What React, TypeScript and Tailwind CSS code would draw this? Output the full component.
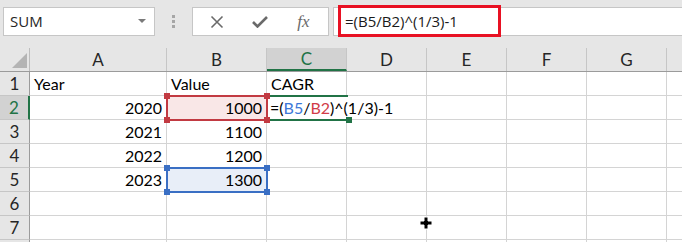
import React from "react";

const cols = [
  { k: "A", w: 137 },
  { k: "B", w: 100 },
  { k: "C", w: 80 },
  { k: "D", w: 80 },
  { k: "E", w: 80 },
  { k: "F", w: 80 },
  { k: "G", w: 80 },
  { k: "", w: 40 },
];

const data: Record<string, string> = {
  A1: "Year",
  B1: "Value",
  C1: "CAGR",
  A2: "2020",
  B2: "1000",
  A3: "2021",
  B3: "1100",
  A4: "2022",
  B4: "1200",
  A5: "2023",
  B5: "1300",
};

const cellFont = { fontFamily: "Lato, 'Liberation Sans', sans-serif" };
const uiFont = { fontFamily: "'Open Sans', 'Noto Sans', sans-serif" };

function Handle({ className }: { className: string }) {
  return <div className={"absolute w-[6px] h-[6px] " + className} />;
}

export default function App() {
  const rows = [1, 2, 3, 4, 5, 6, 7, 8];
  return (
    <div className="w-[682px] h-[242px] overflow-hidden bg-white relative" style={cellFont}>
      {/* toolbar */}
      <div className="h-[48px] bg-[#e6e6e6] flex items-start pt-[7px] pl-[3px]">
        <div
          className="w-[152px] h-[29px] bg-white border border-[#c6c6c6] flex items-center pl-[6px] pr-[8px] text-[15px] text-[#262626]"
          style={uiFont}
        >
          <span className="flex-1">SUM</span>
          <svg width="8" height="5" viewBox="0 0 8 5">
            <path d="M0 0 L8 0 L4 4 Z" fill="#7a7a7a" />
          </svg>
        </div>
        <div className="w-[37px] h-[29px] flex flex-col items-center justify-center gap-[2px]">
          <div className="w-[3px] h-[3px] bg-[#a6a6a6]" />
          <div className="w-[3px] h-[3px] bg-[#a6a6a6]" />
          <div className="w-[3px] h-[3px] bg-[#a6a6a6]" />
        </div>
        <div className="w-[137px] h-[29px] bg-white border border-[#c6c6c6] flex items-center">
          <div className="w-[48px] flex justify-center">
            <svg width="14" height="14" viewBox="0 0 14 14">
              <path d="M1.5 1.5 L12.5 12.5 M12.5 1.5 L1.5 12.5" stroke="#6a6a6a" strokeWidth="1.6" />
            </svg>
          </div>
          <div className="w-[38px] flex justify-center">
            <svg width="16" height="13" viewBox="0 0 16 13">
              <path d="M1 7 L5.5 11.5 L15 2" stroke="#6a6a6a" strokeWidth="2.6" fill="none" />
            </svg>
          </div>
          <div className="flex-1 flex justify-center">
            <span
              className="italic text-[17px] text-[#6a6a6a] leading-none"
              style={{ fontFamily: "'Liberation Serif', 'DejaVu Serif', serif" }}
            >
              fx
            </span>
          </div>
        </div>
        <div className="ml-[4px] flex-1 h-[29px] bg-white border border-[#c6c6c6] border-r-0 flex items-center relative">
          <span className="pl-[11px] text-[15px] text-[#1a1a1a]" style={uiFont}>
            =(B5/B2)^(1/3)-1
          </span>
          <div className="absolute left-[4px] top-[-3px] w-[163px] h-[32px] border-[3px] border-[#e81123]" />
        </div>
      </div>

      {/* grid */}
      <div className="relative">
        {/* header row */}
        <div className="flex h-[24px] bg-[#e6e6e6] border-b border-[#9b9b9b]">
          <div className="w-[30px] shrink-0 border-r border-[#bdbdbd] relative">
            <svg className="absolute left-[12px] top-[5px]" width="15" height="15" viewBox="0 0 15 15">
              <path d="M15 0 L15 15 L0 15 Z" fill="#b4b4b4" />
            </svg>
          </div>
          {cols.map((c) => (
            <div
              key={c.k || "x"}
              className={
                "shrink-0 flex items-center justify-center text-[17px] border-r border-[#c6c6c6] " +
                (c.k === "C" ? "bg-[#d2d2d2] text-[#217346] border-b-2 border-b-[#217346]" : "text-[#262626]")
              }
              style={{ width: c.w }}
            >
              {c.k}
            </div>
          ))}
        </div>
        {rows.map((r) => (
          <div key={r} className="flex h-[24px]">
            <div
              className={
                "w-[30px] shrink-0 flex items-center justify-center text-[17px] border-b border-[#c6c6c6] " +
                (r === 2
                  ? "bg-[#d2d2d2] text-[#217346] border-r-2 border-r-[#217346]"
                  : "bg-[#e6e6e6] text-[#262626] border-r border-r-[#9b9b9b]")
              }
            >
              {r < 8 ? r : ""}
            </div>
            {cols.map((c) => {
              const v = data[c.k + r];
              const isNum = v && /^\d+$/.test(v);
              let bg = "";
              if (c.k === "B" && r === 2) bg = "bg-[#f9e7e7]";
              if (c.k === "B" && r === 5) bg = "bg-[#e8eef8]";
              return (
                <div
                  key={c.k || "x"}
                  className={
                    "shrink-0 flex items-center text-[16px] text-black border-r border-b border-[#d4d4d4] overflow-visible whitespace-nowrap " +
                    (isNum ? "justify-end pr-[4px] " : "pl-[4px] ") +
                    bg
                  }
                  style={{ width: c.w }}
                >
                  {v}
                </div>
              );
            })}
          </div>
        ))}

        {/* C2 active cell with formula */}
        <div className="absolute left-[266px] top-[47px] w-[82px] h-[26px] border-t-2 border-b-2 border-l-2 border-[#217346] flex items-center pl-[2px] text-[16px] whitespace-nowrap bg-white">
          <span>=(</span>
          <span className="text-[#3c78d8]">B5</span>
          <span>/</span>
          <span className="text-[#d13c48]">B2</span>
          <span>)^(1/3)-1</span>
          <Handle className="bg-[#217346] right-[-4px] bottom-[-4px]" />
        </div>

        {/* B2 red selection */}
        <div className="absolute left-[166px] top-[47px] w-[102px] h-[26px] border-2 border-[#c23a42]">
          <Handle className="bg-[#c23a42] left-[-4px] top-[-4px]" />
          <Handle className="bg-[#c23a42] right-[-4px] top-[-4px]" />
          <Handle className="bg-[#c23a42] left-[-4px] bottom-[-4px]" />
          <Handle className="bg-[#c23a42] right-[-4px] bottom-[-4px]" />
        </div>

        {/* B5 blue selection */}
        <div className="absolute left-[166px] top-[119px] w-[102px] h-[26px] border-2 border-[#3a6fc4]">
          <Handle className="bg-[#3a6fc4] left-[-4px] top-[-4px]" />
          <Handle className="bg-[#3a6fc4] right-[-4px] top-[-4px]" />
          <Handle className="bg-[#3a6fc4] left-[-4px] bottom-[-4px]" />
          <Handle className="bg-[#3a6fc4] right-[-4px] bottom-[-4px]" />
        </div>

        {/* cursor */}
        <svg className="absolute left-[419px] top-[168px]" width="14" height="14" viewBox="0 0 14 14">
          <path d="M5 1 H9 V5 H13 V9 H9 V13 H5 V9 H1 V5 H5 Z" fill="black" stroke="white" strokeWidth="1" />
        </svg>
      </div>
    </div>
  );
}
